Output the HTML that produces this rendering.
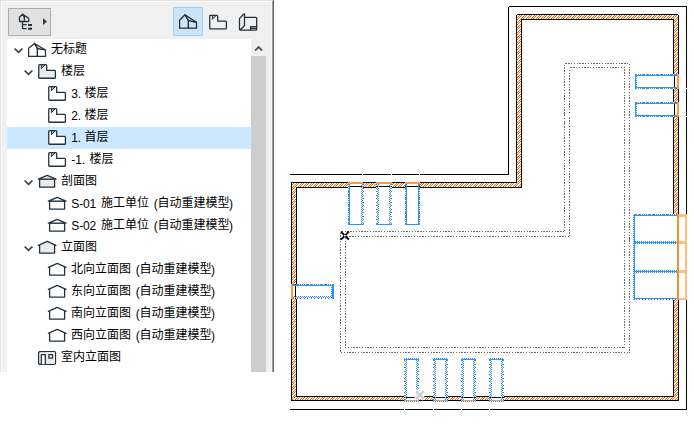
<!DOCTYPE html>
<html><head><meta charset="utf-8"><title>Navigator</title>
<style>
html,body{margin:0;padding:0;background:#fff}
body{width:694px;height:429px;position:relative;overflow:hidden;font-family:"Liberation Sans",sans-serif;font-size:12px;color:#000}
#g{position:absolute;left:0;top:0}
.row{position:absolute;left:0;width:251px;height:22px;white-space:pre}
.a{position:absolute;top:3.2px;line-height:16px;letter-spacing:-0.15px}
.k{position:absolute;top:1.8px;line-height:16px;font-size:12px;letter-spacing:0;font-family:"Liberation Sans","Noto Sans CJK SC",sans-serif;color:#000}
</style></head><body>
<svg id="g" width="694" height="429" viewBox="0 0 694 429">
<defs>
<pattern id="hatch" width="5" height="5" patternUnits="userSpaceOnUse" shape-rendering="crispEdges">
<rect width="5" height="5" fill="#fff"/>
<path d="M0,4h1v1h-1zM1,3h1v1h-1zM2,2h1v1h-1zM3,1h1v1h-1zM4,0h1v1h-1zM0,1h1v1h-1zM1,0h1v1h-1zM2,4h1v1h-1zM3,3h1v1h-1zM4,2h1v1h-1z" fill="#ff6a00"/>
</pattern>
<pattern id="chk1" width="2" height="2" patternUnits="userSpaceOnUse" shape-rendering="crispEdges"><rect x="0" y="0" width="1" height="1" fill="#2b95ff"/><rect x="1" y="1" width="1" height="1" fill="#2b95ff"/></pattern>
<pattern id="chk" width="2" height="2" patternUnits="userSpaceOnUse" shape-rendering="crispEdges">
<rect x="0" y="0" width="1" height="1" fill="#2b95ff"/><rect x="1" y="1" width="1" height="1" fill="#2b95ff"/>
</pattern>
</defs>
<!-- navigator panel -->
<rect x="0" y="0" width="274" height="372" fill="#f0f0f0"/>
<rect x="0" y="0" width="273" height="1" fill="#e3e3e3"/>
<rect x="0" y="0" width="1" height="372" fill="#e3e3e3"/>
<rect x="1" y="1" width="271" height="1" fill="#fff"/>
<rect x="1" y="1" width="1" height="371" fill="#fff"/>
<rect x="271" y="1" width="1" height="371" fill="#f8f8f8"/>
<rect x="272" y="1" width="1" height="371" fill="#a0a0a0"/>
<rect x="273" y="0" width="1" height="372" fill="#696969"/>
<rect x="7" y="39" width="244" height="333" fill="#fff"/>
<rect x="8.5" y="8.5" width="42" height="27" fill="#e1e1e1" stroke="#adadad"/><g stroke="#25323b" stroke-width="1.3" fill="none" stroke-linejoin="round"><path d="M19.5,21.5V17L22.7,14.3L24.5,17.5V21.5Z" fill="#e1e1e1"/><path d="M24.5,21.5H28.7V18.4L22.7,14.3L24.5,17.5Z" fill="#f4f4f4"/><path d="M22.5,21.5V28.6H26.6M22.5,24.6H26.6"/><path d="M28,25H32M28,28.8H32" stroke-width="1.9"/></g><path d="M43,18.2L47,21.6L43,25Z" fill="#3c3c3c"/><rect x="173.5" y="7.5" width="29" height="28" fill="#cce4f7" stroke="#99d1ff"/><g transform="translate(179,14.3)"><g fill="none" stroke="#25323b" stroke-width="1.25" stroke-linejoin="round" stroke-linecap="round"><path d="M0.6,13.9V6L6,0.5L9.4,6.2V13.9Z"/><path d="M9.4,13.9H17.5V8L9.4,6.2Z"/><path d="M6,0.5L17.5,8L9.4,6.2Z" fill="#9aa3a9" fill-opacity="0.45"/></g></g><g transform="translate(209,14.7)"><g stroke="#25323b" stroke-width="1.3" stroke-linejoin="round"><path fill="none" d="M1.6,0.65H7.8Q8.7,0.65 8.7,1.5V6.4H16.5Q17.4,6.4 17.4,7.3V13.4Q17.4,14.25 16.5,14.25H1.6Q0.75,14.25 0.75,13.4V1.5Q0.75,0.65 1.6,0.65Z"/><path fill="#b9bec2" stroke-width="1" d="M3.4,0.8V4.6L7,0.9Z"/></g></g><g stroke="#25323b" stroke-width="1.3" fill="none" stroke-linejoin="round"><path d="M239.5,19.2Q239.5,18.4 240,17.9L243.6,14.3Q244.5,13.5 244.5,14.6V25.5L240.4,29.8Q239.5,30.2 239.5,29Z"/><path d="M244.5,17.4H255.8Q256.7,17.4 256.7,18.3V29.3Q256.7,30.2 255.8,30.2H240.5"/><path d="M250.6,30.2V26.6H256.7M250.6,28.4H256.7"/></g>
<rect x="251" y="56" width="15" height="316" fill="#cdcdcd"/><path d="M255,50.6L258.6,47L262.2,50.6" fill="none" stroke="#505050" stroke-width="1.8"/>
<path d="M14.6,48.5L18.5,52.4L22.4,48.5" fill="none" stroke="#404040" stroke-width="1.7"/><g transform="translate(28,43)"><g fill="#fff" stroke="#25323b" stroke-width="1.25" stroke-linejoin="round" stroke-linecap="round"><path d="M0.6,13.4V5.2L6.5,0.5L9.4,5.5V13.4Z"/><path d="M9.4,13.4H17.5V7.0L9.4,5.5Z"/><path d="M6.5,0.5L17.5,7.0L9.4,5.5Z" fill="#9aa3a9" fill-opacity="0.45"/></g></g><path d="M24.6,70.5L28.5,74.4L32.4,70.5" fill="none" stroke="#404040" stroke-width="1.7"/><g transform="translate(38,64)"><g stroke="#25323b" stroke-width="1.3" stroke-linejoin="round"><path fill="#ebebeb" d="M1.6,0.65H7.8Q8.7,0.65 8.7,1.5V6.4H16.5Q17.4,6.4 17.4,7.3V13.4Q17.4,14.25 16.5,14.25H1.6Q0.75,14.25 0.75,13.4V1.5Q0.75,0.65 1.6,0.65Z"/><path fill="#b9bec2" stroke-width="1" d="M3.4,0.8V4.6L7,0.9Z"/></g></g><g transform="translate(48,86)"><g stroke="#25323b" stroke-width="1.3" stroke-linejoin="round"><path fill="#fff" d="M1.6,0.65H7.8Q8.7,0.65 8.7,1.5V6.4H16.5Q17.4,6.4 17.4,7.3V13.4Q17.4,14.25 16.5,14.25H1.6Q0.75,14.25 0.75,13.4V1.5Q0.75,0.65 1.6,0.65Z"/><path fill="#b9bec2" stroke-width="1" d="M3.4,0.8V4.6L7,0.9Z"/></g></g><g transform="translate(48,108)"><g stroke="#25323b" stroke-width="1.3" stroke-linejoin="round"><path fill="#fff" d="M1.6,0.65H7.8Q8.7,0.65 8.7,1.5V6.4H16.5Q17.4,6.4 17.4,7.3V13.4Q17.4,14.25 16.5,14.25H1.6Q0.75,14.25 0.75,13.4V1.5Q0.75,0.65 1.6,0.65Z"/><path fill="#b9bec2" stroke-width="1" d="M3.4,0.8V4.6L7,0.9Z"/></g></g><rect x="7" y="127" width="244" height="22" fill="#cce8ff"/><g transform="translate(48,130)"><g stroke="#25323b" stroke-width="1.3" stroke-linejoin="round"><path fill="#fff" d="M1.6,0.65H7.8Q8.7,0.65 8.7,1.5V6.4H16.5Q17.4,6.4 17.4,7.3V13.4Q17.4,14.25 16.5,14.25H1.6Q0.75,14.25 0.75,13.4V1.5Q0.75,0.65 1.6,0.65Z"/><path fill="#b9bec2" stroke-width="1" d="M3.4,0.8V4.6L7,0.9Z"/></g></g><g transform="translate(48,152)"><g stroke="#25323b" stroke-width="1.3" stroke-linejoin="round"><path fill="#fff" d="M1.6,0.65H7.8Q8.7,0.65 8.7,1.5V6.4H16.5Q17.4,6.4 17.4,7.3V13.4Q17.4,14.25 16.5,14.25H1.6Q0.75,14.25 0.75,13.4V1.5Q0.75,0.65 1.6,0.65Z"/><path fill="#b9bec2" stroke-width="1" d="M3.4,0.8V4.6L7,0.9Z"/></g></g><path d="M24.6,180.5L28.5,184.4L32.4,180.5" fill="none" stroke="#404040" stroke-width="1.7"/><g transform="translate(38,171)"><g stroke="#25323b" stroke-width="1.3" stroke-linejoin="round"><path fill="#ebebeb" d="M1.6,8.2H16.6V16.2H1.6Z"/><path fill="#ebebeb" d="M0.4,8.2L9.2,4.3L18,8.2Z"/></g></g><g transform="translate(48,193)"><g stroke="#25323b" stroke-width="1.3" stroke-linejoin="round"><path fill="#fff" d="M1.6,8.2H16.6V16.2H1.6Z"/><path fill="#fff" d="M0.4,8.2L9.2,4.3L18,8.2Z"/></g></g><g transform="translate(48,215)"><g stroke="#25323b" stroke-width="1.3" stroke-linejoin="round"><path fill="#fff" d="M1.6,8.2H16.6V16.2H1.6Z"/><path fill="#fff" d="M0.4,8.2L9.2,4.3L18,8.2Z"/></g></g><path d="M24.6,246.5L28.5,250.4L32.4,246.5" fill="none" stroke="#404040" stroke-width="1.7"/><g transform="translate(38,237)"><g stroke="#25323b" stroke-width="1.3" stroke-linejoin="round" stroke-linecap="round"><path fill="#ebebeb" d="M1.6,8.2L9.2,4.5L16.6,8.2V16.2H1.6Z" stroke="none"/><path fill="none" d="M0.4,8.3L9.2,4.3L18,8.3M1.6,8V16.2H16.6V8"/></g></g><g transform="translate(48,259)"><g stroke="#25323b" stroke-width="1.3" stroke-linejoin="round" stroke-linecap="round"><path fill="#fff" d="M1.6,8.2L9.2,4.5L16.6,8.2V16.2H1.6Z" stroke="none"/><path fill="none" d="M0.4,8.3L9.2,4.3L18,8.3M1.6,8V16.2H16.6V8"/></g></g><g transform="translate(48,281)"><g stroke="#25323b" stroke-width="1.3" stroke-linejoin="round" stroke-linecap="round"><path fill="#fff" d="M1.6,8.2L9.2,4.5L16.6,8.2V16.2H1.6Z" stroke="none"/><path fill="none" d="M0.4,8.3L9.2,4.3L18,8.3M1.6,8V16.2H16.6V8"/></g></g><g transform="translate(48,303)"><g stroke="#25323b" stroke-width="1.3" stroke-linejoin="round" stroke-linecap="round"><path fill="#fff" d="M1.6,8.2L9.2,4.5L16.6,8.2V16.2H1.6Z" stroke="none"/><path fill="none" d="M0.4,8.3L9.2,4.3L18,8.3M1.6,8V16.2H16.6V8"/></g></g><g transform="translate(48,325)"><g stroke="#25323b" stroke-width="1.3" stroke-linejoin="round" stroke-linecap="round"><path fill="#fff" d="M1.6,8.2L9.2,4.5L16.6,8.2V16.2H1.6Z" stroke="none"/><path fill="none" d="M0.4,8.3L9.2,4.3L18,8.3M1.6,8V16.2H16.6V8"/></g></g><g transform="translate(38,350)"><g stroke="#25323b" stroke-width="1.3" stroke-linejoin="round"><rect x="0.6" y="1.7" width="16.9" height="12.6" rx="1.2" fill="#fff"/><rect x="7.3" y="2.3" width="9.6" height="11.4" fill="#ebebeb" stroke="none"/><path fill="#fff" d="M3.3,14.2V4.6H7.3V14.2"/><rect x="10.9" y="4.7" width="3.6" height="3.5" fill="#fff"/></g></g>
<!-- floor plan drawing -->
<g shape-rendering="crispEdges">
<rect x="292" y="183" width="229" height="4" fill="url(#hatch)"/><rect x="517" y="15" width="4" height="172" fill="url(#hatch)"/><rect x="517" y="15" width="161" height="4" fill="url(#hatch)"/><rect x="674" y="15" width="4" height="385" fill="url(#hatch)"/><rect x="292" y="397" width="386" height="3" fill="url(#hatch)"/><rect x="292" y="183" width="4" height="217" fill="url(#hatch)"/><rect x="291" y="182" width="226" height="1" fill="#000"/><rect x="516" y="14" width="1" height="169" fill="#000"/><rect x="516" y="14" width="163" height="1" fill="#000"/><rect x="678" y="14" width="1" height="387" fill="#000"/><rect x="291" y="400" width="388" height="1" fill="#000"/><rect x="291" y="182" width="1" height="219" fill="#000"/><rect x="296" y="187" width="226" height="1" fill="#000"/><rect x="521" y="19" width="1" height="169" fill="#000"/><rect x="521" y="19" width="153" height="1" fill="#000"/><rect x="673" y="19" width="1" height="378" fill="#000"/><rect x="296" y="396" width="378" height="1" fill="#000"/><rect x="296" y="187" width="1" height="210" fill="#000"/><rect x="290" y="174" width="72" height="1" fill="#000"/><rect x="363" y="174" width="28" height="1" fill="#000"/><rect x="392" y="174" width="27" height="1" fill="#000"/><rect x="420" y="174" width="89" height="1" fill="#000"/><rect x="508" y="6" width="1" height="169" fill="#000"/><rect x="508" y="6" width="179" height="1" fill="#000"/><rect x="686" y="6" width="1" height="82" fill="#000"/><rect x="686" y="89" width="1" height="27" fill="#000"/><rect x="686" y="117" width="1" height="97" fill="#000"/><rect x="686" y="300" width="1" height="110" fill="#000"/><rect x="290" y="409" width="114" height="1" fill="#000"/><rect x="405" y="409" width="28" height="1" fill="#000"/><rect x="434" y="409" width="27" height="1" fill="#000"/><rect x="462" y="409" width="27" height="1" fill="#000"/><rect x="490" y="409" width="197" height="1" fill="#000"/><rect x="348" y="182" width="15" height="6" fill="#fff"/><rect x="348" y="182" width="15" height="2" fill="#ff9a3c"/><rect x="348" y="186" width="15" height="1" fill="#000"/><rect x="349" y="184" width="1" height="40" fill="#2b95ff"/><rect x="348" y="184" width="1" height="40" fill="url(#chk1)"/><line x1="348.5" y1="184" x2="348.5" y2="224" stroke="#777" stroke-dasharray="1 3 1 2"/><rect x="361" y="184" width="2" height="40" fill="url(#chk)"/><line x1="363.5" y1="184" x2="363.5" y2="224" stroke="#777" stroke-dasharray="1 3 1 2"/><rect x="348" y="224" width="16" height="1" fill="#2b95ff"/><rect x="376" y="182" width="16" height="6" fill="#fff"/><rect x="376" y="182" width="16" height="2" fill="#ff9a3c"/><rect x="376" y="186" width="16" height="1" fill="#000"/><rect x="377" y="184" width="2" height="40" fill="url(#chk)"/><line x1="376.5" y1="184" x2="376.5" y2="224" stroke="#777" stroke-dasharray="1 3 1 2"/><rect x="389" y="184" width="2" height="40" fill="url(#chk)"/><line x1="391.5" y1="184" x2="391.5" y2="224" stroke="#777" stroke-dasharray="1 3 1 2"/><rect x="376" y="224" width="16" height="1" fill="#2b95ff"/><rect x="405" y="182" width="15" height="6" fill="#fff"/><rect x="405" y="182" width="15" height="2" fill="#ff9a3c"/><rect x="405" y="186" width="15" height="1" fill="#000"/><rect x="406" y="184" width="1" height="40" fill="#2b95ff"/><rect x="405" y="184" width="1" height="40" fill="url(#chk1)"/><line x1="405.5" y1="184" x2="405.5" y2="224" stroke="#777" stroke-dasharray="1 3 1 2"/><rect x="418" y="184" width="1" height="40" fill="#2b95ff"/><rect x="419" y="184" width="1" height="40" fill="url(#chk1)"/><line x1="419.5" y1="184" x2="419.5" y2="224" stroke="#777" stroke-dasharray="1 3 1 2"/><rect x="405" y="224" width="15" height="1" fill="#2b95ff"/><rect x="404" y="396" width="15" height="5" fill="#fff"/><rect x="404" y="397" width="15" height="1" fill="#000"/><rect x="404" y="400" width="15" height="1" fill="#ff9a3c"/><rect x="405" y="360" width="2" height="41" fill="url(#chk)"/><line x1="404.5" y1="360" x2="404.5" y2="401" stroke="#777" stroke-dasharray="1 3 1 2"/><rect x="416" y="360" width="2" height="41" fill="url(#chk)"/><line x1="418.5" y1="360" x2="418.5" y2="401" stroke="#777" stroke-dasharray="1 3 1 2"/><rect x="404" y="358" width="15" height="1" fill="url(#chk1)"/><rect x="404" y="359" width="15" height="1" fill="#2b95ff"/><line x1="404" y1="401.5" x2="419" y2="401.5" stroke="#2b95ff" stroke-dasharray="1 1"/><rect x="433" y="396" width="15" height="5" fill="#fff"/><rect x="433" y="397" width="15" height="1" fill="#000"/><rect x="433" y="400" width="15" height="1" fill="#ff9a3c"/><rect x="434" y="360" width="2" height="41" fill="url(#chk)"/><line x1="433.5" y1="360" x2="433.5" y2="401" stroke="#777" stroke-dasharray="1 3 1 2"/><rect x="445" y="360" width="2" height="41" fill="url(#chk)"/><line x1="447.5" y1="360" x2="447.5" y2="401" stroke="#777" stroke-dasharray="1 3 1 2"/><rect x="433" y="358" width="15" height="1" fill="url(#chk1)"/><rect x="433" y="359" width="15" height="1" fill="#2b95ff"/><line x1="433" y1="401.5" x2="448" y2="401.5" stroke="#2b95ff" stroke-dasharray="1 1"/><rect x="461" y="396" width="15" height="5" fill="#fff"/><rect x="461" y="397" width="15" height="1" fill="#000"/><rect x="461" y="400" width="15" height="1" fill="#ff9a3c"/><rect x="462" y="360" width="2" height="41" fill="url(#chk)"/><line x1="461.5" y1="360" x2="461.5" y2="401" stroke="#777" stroke-dasharray="1 3 1 2"/><rect x="473" y="360" width="2" height="41" fill="url(#chk)"/><line x1="475.5" y1="360" x2="475.5" y2="401" stroke="#777" stroke-dasharray="1 3 1 2"/><rect x="461" y="358" width="15" height="1" fill="url(#chk1)"/><rect x="461" y="359" width="15" height="1" fill="#2b95ff"/><line x1="461" y1="401.5" x2="476" y2="401.5" stroke="#2b95ff" stroke-dasharray="1 1"/><rect x="489" y="396" width="15" height="5" fill="#fff"/><rect x="489" y="397" width="15" height="1" fill="#000"/><rect x="489" y="400" width="15" height="1" fill="#ff9a3c"/><rect x="490" y="360" width="2" height="41" fill="url(#chk)"/><line x1="489.5" y1="360" x2="489.5" y2="401" stroke="#777" stroke-dasharray="1 3 1 2"/><rect x="501" y="360" width="2" height="41" fill="url(#chk)"/><line x1="503.5" y1="360" x2="503.5" y2="401" stroke="#777" stroke-dasharray="1 3 1 2"/><rect x="489" y="358" width="15" height="1" fill="url(#chk1)"/><rect x="489" y="359" width="15" height="1" fill="#2b95ff"/><line x1="489" y1="401.5" x2="504" y2="401.5" stroke="#2b95ff" stroke-dasharray="1 1"/><rect x="673" y="74" width="6" height="15" fill="#fff"/><rect x="674" y="74" width="1" height="15" fill="#000"/><rect x="677" y="74" width="2" height="15" fill="#ff9a3c"/><rect x="636" y="75" width="41" height="1" fill="#2b95ff"/><rect x="636" y="74" width="41" height="1" fill="url(#chk1)"/><line x1="636" y1="74.5" x2="677" y2="74.5" stroke="#777" stroke-dasharray="1 3 1 2"/><rect x="636" y="87" width="41" height="1" fill="#2b95ff"/><rect x="636" y="88" width="41" height="1" fill="url(#chk1)"/><line x1="636" y1="88.5" x2="677" y2="88.5" stroke="#777" stroke-dasharray="1 3 1 2"/><rect x="635" y="74" width="1" height="15" fill="#2b95ff"/><rect x="636" y="74" width="1" height="15" fill="url(#chk1)"/><rect x="673" y="102" width="6" height="15" fill="#fff"/><rect x="674" y="102" width="1" height="15" fill="#000"/><rect x="677" y="102" width="2" height="15" fill="#ff9a3c"/><rect x="636" y="103" width="41" height="1" fill="#2b95ff"/><rect x="636" y="102" width="41" height="1" fill="url(#chk1)"/><line x1="636" y1="102.5" x2="677" y2="102.5" stroke="#777" stroke-dasharray="1 3 1 2"/><rect x="636" y="115" width="41" height="1" fill="#2b95ff"/><rect x="636" y="116" width="41" height="1" fill="url(#chk1)"/><line x1="636" y1="116.5" x2="677" y2="116.5" stroke="#777" stroke-dasharray="1 3 1 2"/><rect x="635" y="102" width="1" height="15" fill="#2b95ff"/><rect x="636" y="102" width="1" height="15" fill="url(#chk1)"/><rect x="291" y="284" width="6" height="15" fill="#fff"/><rect x="291" y="284" width="2" height="15" fill="#ff9a3c"/><rect x="295" y="284" width="1" height="15" fill="#000"/><rect x="293" y="285" width="39" height="1" fill="#2b95ff"/><rect x="293" y="284" width="39" height="1" fill="url(#chk1)"/><line x1="293" y1="284.5" x2="332" y2="284.5" stroke="#777" stroke-dasharray="1 3 1 2"/><rect x="293" y="296" width="39" height="2" fill="url(#chk)"/><line x1="293" y1="298.5" x2="332" y2="298.5" stroke="#777" stroke-dasharray="1 3 1 2"/><rect x="332" y="284" width="2" height="15" fill="#2b95ff"/><rect x="331" y="286" width="1" height="11" fill="url(#chk1)"/><rect x="673" y="214" width="6" height="86" fill="#fff"/><rect x="677" y="214" width="2" height="86" fill="#ff8a26"/><rect x="685" y="214" width="2" height="86" fill="#ffbe80"/><rect x="679" y="214" width="6" height="3" fill="#ffbe80"/><rect x="679" y="241" width="6" height="3" fill="#ffbe80"/><rect x="679" y="270" width="6" height="3" fill="#ffbe80"/><rect x="679" y="298" width="6" height="2" fill="#ffbe80"/><rect x="633" y="214" width="1" height="86" fill="url(#chk1)"/><rect x="634" y="214" width="1" height="86" fill="#2b95ff"/><rect x="635" y="215" width="42" height="1" fill="#2b95ff"/><rect x="635" y="214" width="42" height="1" fill="url(#chk1)"/><line x1="635" y1="214.5" x2="677" y2="214.5" stroke="#777" stroke-dasharray="1 3 1 2"/><rect x="635" y="241" width="42" height="1" fill="url(#chk1)"/><rect x="635" y="242" width="42" height="1" fill="#2b95ff"/><rect x="635" y="243" width="42" height="1" fill="url(#chk1)"/><rect x="635" y="270" width="42" height="1" fill="url(#chk1)"/><rect x="635" y="271" width="42" height="1" fill="#2b95ff"/><rect x="635" y="272" width="42" height="1" fill="url(#chk1)"/><rect x="635" y="298" width="42" height="1" fill="#2b95ff"/><line x1="636" y1="299.5" x2="677" y2="299.5" stroke="#6a6a6a" stroke-dasharray="1 2"/><rect x="508" y="6" width="1" height="1" fill="#fff"/><rect x="516" y="14" width="1" height="1" fill="#fff"/><rect x="678" y="14" width="1" height="1" fill="#fff"/><path d="M564.5,63.5H629.5V352.5H340.5V231.5H564.5Z" fill="none" stroke="#6a6a6a" stroke-dasharray="2 1 2 1 1 2 1 2 1 1"/><path d="M569.5,67.5H624.5V347.5H345.5V236.5H569.5Z" fill="none" stroke="#6a6a6a" stroke-dasharray="2 1 2 1 1 2 1 2 1 1"/><g shape-rendering="auto"><path d="M344.35,235.15L340.90,231.70M344.35,236.25L340.90,239.70M345.45,235.15L348.90,231.70M345.45,236.25L348.90,239.70" stroke="#000" stroke-width="1.8" fill="none"/></g><g shape-rendering="auto"><path d="M419.80,395.00L415.70,390.90M419.80,395.00L415.70,399.10M419.80,395.00L423.90,390.90M419.80,395.00L423.90,399.10" stroke="#fff" stroke-width="4" fill="none"/><path d="M419.80,395.00L415.90,391.10M419.80,395.00L415.90,398.90M419.80,395.00L423.70,391.10M419.80,395.00L423.70,398.90" stroke="#cfcfcf" stroke-width="2.3" fill="none"/><rect x="418" y="393.2" width="3.6" height="3.6" fill="#cfcfcf"/></g>
</g>
</svg>
<div class="row" style="top:39px"><span class="k" style="left:51px">无标题</span></div><div class="row" style="top:61px"><span class="k" style="left:61px">楼层</span></div><div class="row" style="top:83px"><span class="a" style="left:71.3px">3. </span><span class="k" style="left:84.5px">楼层</span></div><div class="row" style="top:105px"><span class="a" style="left:71.3px">2. </span><span class="k" style="left:84.5px">楼层</span></div><div class="row" style="top:127px"><span class="a" style="left:71.3px">1. </span><span class="k" style="left:84.5px">首层</span></div><div class="row" style="top:149px"><span class="a" style="left:71.3px">-1. </span><span class="k" style="left:89.5px">楼层</span></div><div class="row" style="top:171px"><span class="k" style="left:61px">剖面图</span></div><div class="row" style="top:193px"><span class="a" style="left:71.3px">S-01 </span><span class="k" style="left:101px">施工单位</span><span class="a" style="left:153.8px">(</span><span class="k" style="left:157.5px">自动重建模型</span><span class="a" style="left:229px">)</span></div><div class="row" style="top:215px"><span class="a" style="left:71.3px">S-02 </span><span class="k" style="left:101px">施工单位</span><span class="a" style="left:153.8px">(</span><span class="k" style="left:157.5px">自动重建模型</span><span class="a" style="left:229px">)</span></div><div class="row" style="top:237px"><span class="k" style="left:61px">立面图</span></div><div class="row" style="top:259px"><span class="k" style="left:71px">北向立面图</span><span class="a" style="left:135.8px">(</span><span class="k" style="left:139.5px">自动重建模型</span><span class="a" style="left:211px">)</span></div><div class="row" style="top:281px"><span class="k" style="left:71px">东向立面图</span><span class="a" style="left:135.8px">(</span><span class="k" style="left:139.5px">自动重建模型</span><span class="a" style="left:211px">)</span></div><div class="row" style="top:303px"><span class="k" style="left:71px">南向立面图</span><span class="a" style="left:135.8px">(</span><span class="k" style="left:139.5px">自动重建模型</span><span class="a" style="left:211px">)</span></div><div class="row" style="top:325px"><span class="k" style="left:71px">西向立面图</span><span class="a" style="left:135.8px">(</span><span class="k" style="left:139.5px">自动重建模型</span><span class="a" style="left:211px">)</span></div><div class="row" style="top:347px"><span class="k" style="left:61px">室内立面图</span></div>
</body></html>
